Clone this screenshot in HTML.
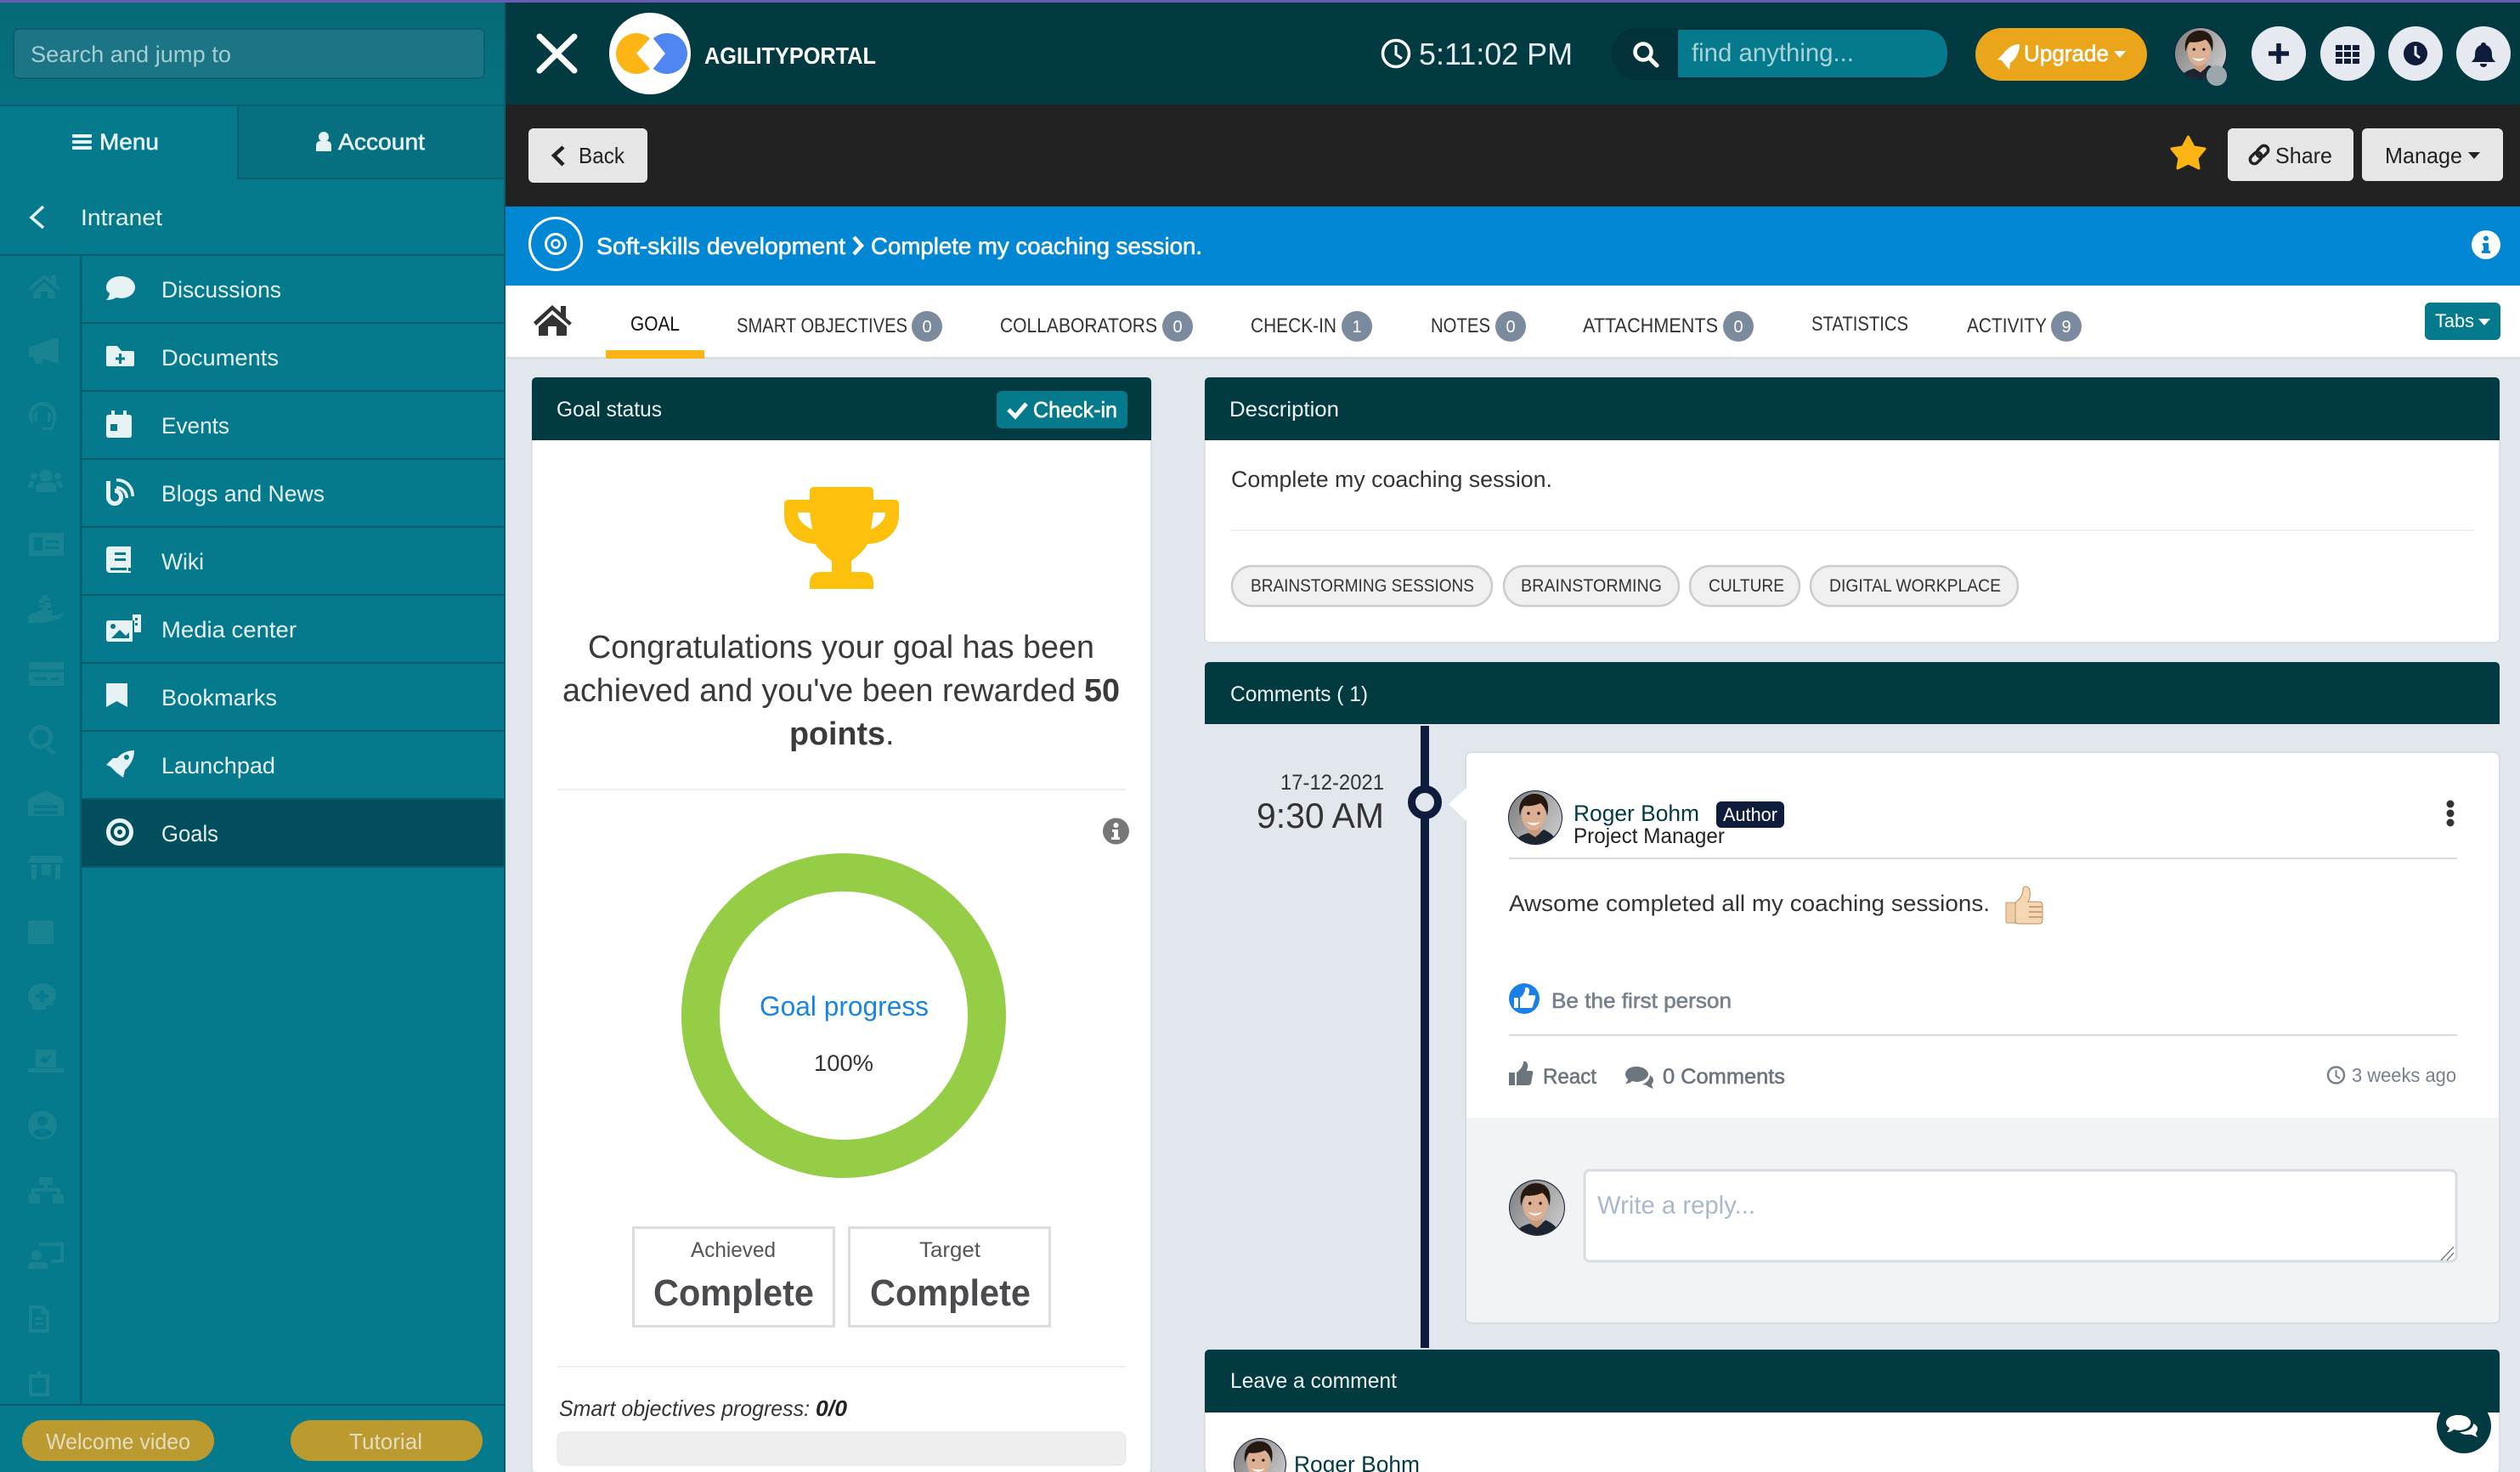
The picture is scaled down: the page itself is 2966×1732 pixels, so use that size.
<!DOCTYPE html>
<html lang="en"><head><meta charset="utf-8"><title>AgilityPortal</title>
<style>
html,body{margin:0;padding:0;width:2966px;height:1732px;overflow:hidden;background:#e2e7ee}
svg{display:block;font-size:27px}
text{font-family:"Liberation Sans",Arial,sans-serif;white-space:pre}
.s{fill:#e6f2f4}
.w{fill:#fff}
.semi{stroke:currentColor;stroke-width:.6px}
.tab{font-size:24px;fill:#333}
.bd{font-size:20px;fill:#fff;text-anchor:middle}
.tag{font-size:21px;fill:#333}
</style></head><body>
<svg xmlns="http://www.w3.org/2000/svg" width="2966" height="1732" viewBox="0 0 2966 1732">
<defs>
<linearGradient id="sbt" x1="0" y1="0" x2="0" y2="1"><stop offset="0" stop-color="#066a78"/><stop offset="1" stop-color="#067280"/></linearGradient>
<linearGradient id="avbg" x1="0" y1="0" x2="1" y2="0.6"><stop offset="0" stop-color="#7c7c7c"/><stop offset="1" stop-color="#c4c4c4"/></linearGradient>
<clipPath id="avc"><circle cx="32" cy="32" r="31"/></clipPath>
<symbol id="av" viewBox="0 0 64 64">
<circle cx="32" cy="32" r="32" fill="#101c3c"/>
<g clip-path="url(#avc)">
<rect width="64" height="64" fill="url(#avbg)"/>
<path d="M6 64C10 54 18 52 24 50L32 54L42 46C50 50 56 54 58 64Z" fill="#1c2430"/>
<path d="M24 42H38V50L32 55L24 50Z" fill="#c89a7e"/>
<ellipse cx="30" cy="29" rx="14" ry="18" fill="#dcae92"/>
<path d="M14 30C10 13 21 4 31 4C43 4 50 13 46 30C45 23 42 18 38 15C32 18 24 19 19 18C16 21 15 25 14 30Z" fill="#241811"/>
<path d="M22 37Q30 45 38 37Q30 40 22 37Z" fill="#fff"/>
<circle cx="24" cy="27" r="1.700" fill="#2a1a12"/><circle cx="36" cy="27" r="1.700" fill="#2a1a12"/>
</g>
</symbol>
</defs>

<rect width="2966" height="1732" fill="#e2e7ee"/>
<rect width="2966" height="4" fill="#6a5cb4"/>

<!-- SIDEBAR -->
<rect x="0" y="3" width="595" height="1729" fill="#047a8c"/>
<rect x="0" y="3" width="593" height="121" fill="url(#sbt)"/>
<rect x="280" y="124" width="313" height="86" fill="#067080"/>
<rect x="0" y="123" width="593" height="2" fill="#0a5c6e"/>
<rect x="279" y="123" width="2" height="88" fill="#0a5c6e"/>
<rect x="280" y="209" width="313" height="2" fill="#0a5c6e"/>
<rect x="593" y="3" width="2" height="1729" fill="#0a5c6e"/>
<rect x="16" y="34" width="554" height="58" rx="6" fill="#1b7584" stroke="#0b5f70" stroke-width="2"/>
<text x="36" y="73" font-size="27" textLength="236" lengthAdjust="spacingAndGlyphs" fill="#a6cdd3">Search and jump to</text>

<g fill="#e6f2f4"><rect x="85" y="158" width="23" height="4" rx="1"/><rect x="85" y="165" width="23" height="4" rx="1"/><rect x="85" y="172" width="23" height="4" rx="1"/>
<circle cx="381" cy="161" r="6"/><path d="M372 178V172Q372 166 377 166H385Q390 166 390 172V178Z"/></g>
<text x="117" y="176" textLength="70" lengthAdjust="spacingAndGlyphs" class="s semi" color="#e6f2f4">Menu</text>
<text x="398" y="176" textLength="102" lengthAdjust="spacingAndGlyphs" class="s semi" color="#e6f2f4">Account</text>
<path d="M51 243L37 256L51 268" fill="none" stroke="#e6f2f4" stroke-width="3.500"/>
<text x="95" y="265" textLength="96" lengthAdjust="spacingAndGlyphs" class="s">Intranet</text>

<rect x="0" y="299" width="593" height="2" fill="#0a5c6e"/>
<rect x="96" y="940" width="497" height="80" fill="#034e5c"/>
<g fill="#0a5c6e"><rect x="94" y="300" width="2.500" height="1353"/>
<rect x="96" y="379" width="497" height="2"/><rect x="96" y="459" width="497" height="2"/><rect x="96" y="539" width="497" height="2"/><rect x="96" y="619" width="497" height="2"/><rect x="96" y="699" width="497" height="2"/><rect x="96" y="779" width="497" height="2"/><rect x="96" y="859" width="497" height="2"/><rect x="96" y="939" width="497" height="2"/><rect x="96" y="1019" width="497" height="2"/>
<rect x="0" y="1652" width="593" height="2"/></g>

<g fill="#e6f2f4">
<text x="190" y="350" textLength="141" lengthAdjust="spacingAndGlyphs" class="s">Discussions</text>
<text x="190" y="430" textLength="138" lengthAdjust="spacingAndGlyphs" class="s">Documents</text>
<text x="190" y="510" textLength="80" lengthAdjust="spacingAndGlyphs" class="s">Events</text>
<text x="190" y="590" textLength="192" lengthAdjust="spacingAndGlyphs" class="s">Blogs and News</text>
<text x="190" y="670" textLength="50" lengthAdjust="spacingAndGlyphs" class="s">Wiki</text>
<text x="190" y="750" textLength="159" lengthAdjust="spacingAndGlyphs" class="s">Media center</text>
<text x="190" y="830" textLength="136" lengthAdjust="spacingAndGlyphs" class="s">Bookmarks</text>
<text x="190" y="910" textLength="134" lengthAdjust="spacingAndGlyphs" class="s">Launchpad</text>
<text x="190" y="990" textLength="67" lengthAdjust="spacingAndGlyphs" class="s">Goals</text>
<!-- discussions -->
<path d="M142 325C152 325 159 331 159 338C159 345 152 351 142 351L137 350C134 352 130 353 125 353C128 350 129 347 129 345C126 343 125 341 125 338C125 331 132 325 142 325Z"/>
<!-- documents -->
<path fill-rule="evenodd" d="M127 407H138L143 413H156Q158 413 158 415V429Q158 431 156 431H127Q125 431 125 429V409Q125 407 127 407ZM140 416V420.500H136V423.500H140V428H143V423.500H147V420.500H143V416Z"/>
<!-- events -->
<path fill-rule="evenodd" d="M131 483H135V488H145V483H149V488H152Q155 488 155 491V512Q155 515 152 515H128Q125 515 125 512V491Q125 488 128 488H131ZM130 499V507H138V499Z"/>
<path d="M127.500 566V585A7.500 7.500 0 1 0 135 577.500" fill="none" stroke="#e6f2f4" stroke-width="5"/>
<path d="M137 572C145 572 151 578 151 586H147.500C147.500 580 143 575.500 137 575.500Z"/><path d="M137 563C150 563 158 572 158 584H154.500C154.500 574 147 566.500 137 566.500Z"/>
<!-- wiki -->
<path fill-rule="evenodd" d="M129 643H154V668H151V672H154V674H130Q125 674 125 669V647Q125 643 129 643ZM135 650V653H148V650ZM135 657V660H148V657ZM130 668V671H149V668Z"/>
<!-- media -->
<path fill-rule="evenodd" d="M128 730H156V755H128Q125 755 125 752V733Q125 730 128 730ZM131 751L141 741L148 748L152 744V751ZM156 723H166V744H158V730H156Z"/><circle cx="133" cy="737" r="3" fill="#047a8c"/><rect x="159" y="727" width="3" height="3" fill="#047a8c"/><rect x="159" y="733" width="3" height="3" fill="#047a8c"/>
<!-- bookmark -->
<path d="M125 804H150V832L137.500 825L125 832Z"/>
<!-- rocket -->
<path fill-rule="evenodd" d="M158 883C158 893 153 901 147 906L145 915L137 909L130 902L125 900L133 892L138 892C143 886 150 883 158 883ZM149 888A3 3 0 1 0 149 894A3 3 0 1 0 149 888Z"/>
</g>
<g fill="none" stroke="#e6f2f4"><circle cx="141" cy="979" r="13.500" stroke-width="5"/><circle cx="141" cy="979" r="5" stroke-width="4"/></g>

<!-- faint strip icons -->
<g fill="#1a8392">
<path d="M34 338L52 323L60 329V324H66V335L71 339L69 342L52 328L36 342ZM39 344L52 332L65 344V351H56V343H48V351H39Z"/>
<path d="M34 408L45 405L63 398H69V427H64L50 422V428H41L40 420H34Z"/>
<path fill-rule="evenodd" d="M50 473C41 473 34 480 34 490C34 494 36 498 39 499L39 493C37 488 40 477 50 477C60 477 63 487 62 495L60 503H50V506H62L66 494C68 483 62 473 50 473ZM44 484C38 484 38 497 44 497ZM56 484V497C62 497 62 484 56 484Z"/>
<circle cx="54" cy="560" r="7.500"/><circle cx="40" cy="560" r="4"/><circle cx="68" cy="560" r="4"/><path d="M42 579V574Q42 568 48 568H60Q66 568 66 574V579ZM33 574Q33 566 38 566H41L38 574ZM74 574Q74 566 69 566H66L70 574Z"/>
<path fill-rule="evenodd" d="M34 627H75V654H34ZM40 632V648H50V632ZM54 636V639H70V636ZM54 643V646H70V643Z"/>
<path d="M33 724L48 718H62L60 724H68L75 720L71 728L50 733H33ZM50 700H56V704C60 704 60 707 60 707H52V709H60V715H56V718H50V715H46V712H54V710H46V704H50Z"/>
<path fill-rule="evenodd" d="M34 779H75V807H34ZM34 788V791H75V788ZM40 797V800H55V797ZM60 797V800H70V797Z"/>
<path fill-rule="evenodd" d="M48 853A14 14 0 1 0 48 881A14 14 0 1 0 48 853ZM48 858A9 9 0 1 1 48 876A9 9 0 1 1 48 858ZM58 878L66 885L62 889L54 881Z"/>
<path fill-rule="evenodd" d="M33 941L54 930L75 941V960H33ZM40 947V951H68V947ZM40 954V958H68V954Z"/>
<path d="M36 1007H72L75 1015H33ZM37 1017H43V1035H37ZM49 1017H60V1030H49ZM65 1017H71V1035H65Z"/>
<rect x="33" y="1083" width="30" height="28" rx="2"/>
<path fill-rule="evenodd" d="M50 1157C38 1157 33 1165 33 1172C33 1176 35 1180 38 1182V1188H54V1183H62L66 1172C66 1164 60 1157 50 1157ZM47 1165H52V1170H57V1174H52V1179H47V1174H42V1170H47Z"/>
<path fill-rule="evenodd" d="M42 1235H66V1256H42ZM47 1248L51 1243L54 1246L60 1240V1244L54 1251ZM33 1257H75V1262H33Z"/>
<path fill-rule="evenodd" d="M50 1307A17 17 0 1 0 50 1341A17 17 0 1 0 50 1307ZM50 1313A6 6 0 1 1 50 1325A6 6 0 1 1 50 1313ZM39 1334Q41 1328 50 1328Q59 1328 61 1334Q56 1338 50 1338Q44 1338 39 1334Z"/>
<path d="M46 1385H62V1394H56V1398H71V1405H75V1416H62V1405H67V1402H41V1405H47V1416H34V1405H37V1398H52V1394H46Z"/>
<path fill-rule="evenodd" d="M46 1462H75V1486H60V1482H71V1466H46ZM43 1471A6 6 0 1 1 43 1483A6 6 0 1 1 43 1471ZM33 1493V1490Q33 1485 38 1485H50Q56 1485 56 1490V1493Z"/>
<path fill-rule="evenodd" d="M34 1536H50L58 1544V1568H34ZM38 1540V1564H54V1546H48V1540ZM41 1550H51V1553H41ZM41 1556H51V1559H41Z"/>
<path fill-rule="evenodd" d="M34 1617H44V1613H48V1617H58V1643H34ZM38 1621V1639H54V1621Z"/>
</g>

<rect x="26" y="1671" width="226" height="48" rx="24" fill="#bb9a2f"/>
<rect x="342" y="1671" width="226" height="48" rx="24" fill="#bb9a2f"/>
<text x="54" y="1705" font-size="26" textLength="170" lengthAdjust="spacingAndGlyphs" fill="#e4dcc0">Welcome video</text>
<text x="411" y="1705" font-size="26" textLength="86" lengthAdjust="spacingAndGlyphs" fill="#e4dcc0">Tutorial</text>

<!-- HEADER -->
<rect x="595" y="3" width="2371" height="121" fill="#023a41"/>
<path d="M635 43L676 83M676 43L635 83" stroke="#fff" stroke-width="7" stroke-linecap="round"/>
<circle cx="765" cy="63" r="48" fill="#fff"/>
<circle cx="749" cy="63" r="24" fill="#fdb515"/>
<circle cx="785" cy="63" r="24" fill="#4f86f2"/>
<path d="M767 43L783 63L767 83L749 63Z" fill="#fff"/>
<text x="829" y="75" font-size="28" font-weight="700" textLength="202" lengthAdjust="spacingAndGlyphs" fill="#fff">AGILITYPORTAL</text>
<circle cx="1643" cy="63" r="15.500" fill="none" stroke="#fff" stroke-width="3.500"/><path d="M1643 53V64L1650 69" fill="none" stroke="#fff" stroke-width="3"/>
<text x="1670" y="76" font-size="36" textLength="181" lengthAdjust="spacingAndGlyphs" fill="#e4ecee">5:11:02 PM</text>
<rect x="1898" y="34" width="395" height="59" rx="29" fill="#03323a" stroke="#04303a" stroke-width="2"/>
<path d="M1975 35H2264Q2292 35 2292 63Q2292 91 2264 91H1975Z" fill="#047a8c"/>
<circle cx="1934" cy="61" r="9.500" fill="none" stroke="#fff" stroke-width="4.500"/><path d="M1941 68L1950 77" stroke="#fff" stroke-width="5" stroke-linecap="round"/>
<text x="1991" y="72" font-size="30" textLength="191" lengthAdjust="spacingAndGlyphs" fill="#a8d3d8">find anything...</text>
<rect x="2325" y="33" width="202" height="62" rx="31" fill="#eaa51b"/>
<path fill-rule="evenodd" d="M2377 52C2377 62 2372 70 2366 74L2365 82L2358 74L2356 71L2351 70L2358 63C2363 56 2370 52 2377 52Z" fill="#fff"/>
<text x="2382" y="72" font-size="27" textLength="100" lengthAdjust="spacingAndGlyphs" class="w semi" color="#fff">Upgrade</text>
<path d="M2488 60H2502L2495 68Z" fill="#fff"/>
<use href="#av" x="2559" y="32" width="62" height="62"/>
<circle cx="2609" cy="89" r="12" fill="#9aa8ad"/>
<circle cx="2682" cy="63" r="32" fill="#e6e9f0"/><circle cx="2763" cy="63" r="32" fill="#e6e9f0"/><circle cx="2843" cy="63" r="32" fill="#e6e9f0"/><circle cx="2923" cy="63" r="32" fill="#e6e9f0"/>
<path d="M2670 63H2694M2682 51V75" stroke="#101c3c" stroke-width="5.500"/>
<g fill="#101c3c"><rect x="2749" y="53" width="8" height="6"/><rect x="2759" y="53" width="8" height="6"/><rect x="2769" y="53" width="8" height="6"/><rect x="2749" y="61" width="8" height="6"/><rect x="2759" y="61" width="8" height="6"/><rect x="2769" y="61" width="8" height="6"/><rect x="2749" y="69" width="8" height="6"/><rect x="2759" y="69" width="8" height="6"/><rect x="2769" y="69" width="8" height="6"/>
<circle cx="2843" cy="63" r="14"/><path d="M2923 50Q2926 50 2926 53C2932 55 2933 60 2933 65C2933 70 2936 71 2937 73H2909C2910 71 2913 70 2913 65C2913 60 2914 55 2920 53Q2920 50 2923 50ZM2919 75H2927Q2927 79 2923 79Q2919 79 2919 75Z"/></g>
<path d="M2843 54V64L2848 68" fill="none" stroke="#e6e9f0" stroke-width="3"/>

<!-- DARK BAR -->
<rect x="595" y="123" width="2371" height="120" fill="#222"/>
<rect x="622" y="151" width="140" height="64" rx="6" fill="#e6e6e6"/>
<path d="M663 173L652 183L663 194" fill="none" stroke="#222" stroke-width="4.500"/>
<text x="681" y="192" font-size="26" textLength="54" lengthAdjust="spacingAndGlyphs" fill="#222">Back</text>
<path d="M2575.500 161L2582 173L2595 175L2586 186L2588 198L2575.500 192L2563 198L2565 186L2556 175L2569 173Z" fill="#fdb515" stroke="#fdb515" stroke-width="3" stroke-linejoin="round"/>
<rect x="2622" y="151" width="148" height="62" rx="6" fill="#e6e6e6"/>
<g transform="rotate(-45 2659 182)" fill="none" stroke="#222" stroke-width="3.500"><rect x="2646" y="177" width="15" height="10" rx="5"/><rect x="2657" y="177" width="15" height="10" rx="5"/></g>
<text x="2678" y="192" font-size="26" textLength="67" lengthAdjust="spacingAndGlyphs" fill="#222">Share</text>
<rect x="2780" y="151" width="166" height="62" rx="6" fill="#e6e6e6"/>
<text x="2807" y="192" font-size="26" textLength="91" lengthAdjust="spacingAndGlyphs" fill="#222">Manage</text>
<path d="M2905 179H2919L2912 187Z" fill="#222"/>

<!-- BLUE BAR -->
<rect x="595" y="243" width="2371" height="93" fill="#0287d4"/>
<circle cx="654" cy="287" r="30.500" fill="none" stroke="#fff" stroke-width="3"/>
<circle cx="654" cy="287" r="11.500" fill="none" stroke="#fff" stroke-width="3"/><circle cx="654" cy="287" r="4.500" fill="none" stroke="#fff" stroke-width="2.500"/>
<text x="702" y="299" font-size="28" textLength="293" lengthAdjust="spacingAndGlyphs" class="w semi" color="#fff">Soft-skills development</text>
<path d="M1005 279L1014 289L1005 299" fill="none" stroke="#fff" stroke-width="4.500"/>
<text x="1025" y="299" font-size="28" textLength="390" lengthAdjust="spacingAndGlyphs" class="w semi" color="#fff">Complete my coaching session.</text>
<circle cx="2926" cy="288" r="17" fill="#fff"/><circle cx="2926" cy="280.500" r="3" fill="#0287d4"/><path d="M2922 286H2929V295H2931V298H2921V295H2923V289H2922Z" fill="#0287d4"/>

<!-- TAB BAR -->
<rect x="595" y="336" width="2371" height="84" fill="#fff"/>
<rect x="595" y="420" width="2371" height="2" fill="#d8dce0"/>
<path d="M628 379L650 359L660 368V360H666V374L673 380L670 383L650 365L631 383ZM634 384L650 370L667 384V395H655V384H645V395H634Z" fill="#333"/>
<text x="742" y="389" font-size="24" textLength="58" lengthAdjust="spacingAndGlyphs" fill="#111">GOAL</text>
<rect x="713" y="412" width="116" height="10" fill="#fdb515"/>
<text x="867" y="391" textLength="201" lengthAdjust="spacingAndGlyphs" class="tab">SMART OBJECTIVES</text>
<text x="1177" y="391" textLength="185" lengthAdjust="spacingAndGlyphs" class="tab">COLLABORATORS</text>
<text x="1472" y="391" textLength="101" lengthAdjust="spacingAndGlyphs" class="tab">CHECK-IN</text>
<text x="1684" y="391" textLength="70" lengthAdjust="spacingAndGlyphs" class="tab">NOTES</text>
<text x="1863" y="391" textLength="159" lengthAdjust="spacingAndGlyphs" class="tab">ATTACHMENTS</text>
<text x="2132" y="389" textLength="114" lengthAdjust="spacingAndGlyphs" class="tab">STATISTICS</text>
<text x="2315" y="391" textLength="94" lengthAdjust="spacingAndGlyphs" class="tab">ACTIVITY</text>
<g fill="#7b8a9e"><circle cx="1091" cy="384" r="18"/><circle cx="1386" cy="384" r="18"/><circle cx="1597" cy="384" r="18"/><circle cx="1778" cy="384" r="18"/><circle cx="2046" cy="384" r="18"/><circle cx="2432" cy="384" r="18"/></g>
<text x="1091" y="391" class="bd">0</text><text x="1386" y="391" class="bd">0</text><text x="1597" y="391" class="bd">1</text><text x="1778" y="391" class="bd">0</text><text x="2046" y="391" class="bd">0</text><text x="2432" y="391" class="bd">9</text>
<rect x="2854" y="356" width="89" height="44" rx="6" fill="#047a8c"/>
<text x="2866" y="385" font-size="22" textLength="46" lengthAdjust="spacingAndGlyphs" class="w">Tabs</text>
<path d="M2917 375H2931L2924 383Z" fill="#fff"/>

<!-- LEFT PANEL -->
<rect x="626" y="444" width="729" height="1290" rx="6" fill="#fff" stroke="#d6dce3" stroke-width="1.500"/>
<path d="M632 444H1349Q1355 444 1355 450V518H626V450Q626 444 632 444Z" fill="#023a41"/>
<text x="655" y="490" font-size="25" textLength="124" lengthAdjust="spacingAndGlyphs" fill="#eef4f5">Goal status</text>
<rect x="1173" y="460" width="154" height="44" rx="6" fill="#047a8c"/>
<path d="M1187 482L1195 490L1208 475" fill="none" stroke="#fff" stroke-width="5"/>
<text x="1216" y="491" font-size="26" textLength="99" lengthAdjust="spacingAndGlyphs" class="w semi" color="#fff">Check-in</text>
<path fill-rule="evenodd" fill="#fdc10d" d="M958 573H1023Q1028 573 1028 578V588H1053Q1058 588 1058 593V606C1058 628 1040 640 1021 640C1017 648 1010 654 1002 660V673H1015Q1028 673 1028 686V693H953V686Q953 673 966 673H979V660C971 654 964 648 960 640C941 640 923 628 923 606V593Q923 588 928 588H953V578Q953 573 958 573ZM939 603C939 612 946 618 956 623L953 603ZM1042 603H1028L1025 623C1035 618 1042 612 1042 603Z"/>
<text x="692" y="774" font-size="38" textLength="596" lengthAdjust="spacingAndGlyphs" fill="#3a3a3a">Congratulations your goal has been</text>
<text x="662" y="825" font-size="38" textLength="604" lengthAdjust="spacingAndGlyphs" fill="#3a3a3a">achieved and you've been rewarded</text>
<text x="1276" y="825" font-size="38" font-weight="700" textLength="42" lengthAdjust="spacingAndGlyphs" fill="#3a3a3a">50</text>
<text x="929" y="876" font-size="38" font-weight="700" textLength="113" lengthAdjust="spacingAndGlyphs" fill="#3a3a3a">points</text>
<text x="1042" y="876" font-size="38" fill="#3a3a3a">.</text>
<rect x="656" y="928" width="669" height="2" fill="#eceef0"/>
<circle cx="1313.500" cy="978" r="15.500" fill="#777"/><circle cx="1313.500" cy="971" r="3" fill="#fff"/><path d="M1309 976H1316V985H1318V988H1308V985H1311V979H1309Z" fill="#fff"/>
<circle cx="993" cy="1195" r="168.500" fill="none" stroke="#95cd47" stroke-width="45"/>
<text x="894" y="1195" font-size="32" textLength="199" lengthAdjust="spacingAndGlyphs" fill="#1a85e0">Goal progress</text>
<text x="958" y="1260" font-size="27" textLength="70" lengthAdjust="spacingAndGlyphs" fill="#333">100%</text>
<rect x="745.500" y="1444.500" width="236" height="116" fill="#fff" stroke="#dcdcdc" stroke-width="3"/>
<rect x="999.500" y="1444.500" width="236" height="116" fill="#fff" stroke="#dcdcdc" stroke-width="3"/>
<text x="813" y="1479" font-size="25" textLength="100" lengthAdjust="spacingAndGlyphs" fill="#555">Achieved</text>
<text x="1082" y="1479" font-size="25" textLength="72" lengthAdjust="spacingAndGlyphs" fill="#555">Target</text>
<text x="769" y="1536" font-size="44" font-weight="700" textLength="189" lengthAdjust="spacingAndGlyphs" fill="#4a4a4f">Complete</text>
<text x="1024" y="1536" font-size="44" font-weight="700" textLength="189" lengthAdjust="spacingAndGlyphs" fill="#4a4a4f">Complete</text>
<rect x="656" y="1607" width="669" height="2" fill="#eceef0"/>
<text x="658" y="1666" font-size="26" font-style="italic" textLength="295" lengthAdjust="spacingAndGlyphs" fill="#333">Smart objectives progress:</text>
<text x="960" y="1666" font-size="26" font-style="italic" font-weight="700" textLength="37" lengthAdjust="spacingAndGlyphs" fill="#222">0/0</text>
<rect x="656" y="1685" width="669" height="39" rx="8" fill="#eee" stroke="#e4e4e4" stroke-width="1"/>

<!-- DESCRIPTION -->
<rect x="1418" y="444" width="1524" height="312" rx="6" fill="#fff" stroke="#d6dce3" stroke-width="1.500"/>
<path d="M1424 444H2936Q2942 444 2942 450V518H1418V450Q1418 444 1424 444Z" fill="#023a41"/>
<text x="1447" y="490" font-size="25" textLength="129" lengthAdjust="spacingAndGlyphs" fill="#eef4f5">Description</text>
<text x="1449" y="573" font-size="27" textLength="378" lengthAdjust="spacingAndGlyphs" fill="#333">Complete my coaching session.</text>
<rect x="1449" y="623" width="1462" height="2" fill="#eceef0"/>
<g fill="#f0f0f0" stroke="#c9cdd1" stroke-width="2.500">
<rect x="1450" y="666" width="306" height="47" rx="23.500"/><rect x="1770" y="666" width="206" height="47" rx="23.500"/><rect x="1989" y="666" width="129" height="47" rx="23.500"/><rect x="2131" y="666" width="244" height="47" rx="23.500"/></g>
<text x="1472" y="696" textLength="263" lengthAdjust="spacingAndGlyphs" class="tag">BRAINSTORMING SESSIONS</text>
<text x="1790" y="696" textLength="166" lengthAdjust="spacingAndGlyphs" class="tag">BRAINSTORMING</text>
<text x="2011" y="696" textLength="89" lengthAdjust="spacingAndGlyphs" class="tag">CULTURE</text>
<text x="2153" y="696" textLength="202" lengthAdjust="spacingAndGlyphs" class="tag">DIGITAL WORKPLACE</text>

<!-- COMMENTS -->
<path d="M1424 779H2936Q2942 779 2942 785V852H1418V785Q1418 779 1424 779Z" fill="#023a41"/>
<text x="1448" y="825" font-size="25" textLength="162" lengthAdjust="spacingAndGlyphs" fill="#eef4f5">Comments ( 1)</text>
<rect x="1672" y="854" width="10" height="732" fill="#101c3c"/>
<circle cx="1677" cy="944" r="15.500" fill="#e2e7ee" stroke="#101c3c" stroke-width="9"/>
<text x="1507" y="929" font-size="25" textLength="122" lengthAdjust="spacingAndGlyphs" fill="#333">17-12-2021</text>
<text x="1479" y="974" font-size="42" textLength="150" lengthAdjust="spacingAndGlyphs" fill="#333">9:30 AM</text>
<path d="M1732 885H2934Q2942 885 2942 893V1549Q2942 1557 2934 1557H1732Q1725 1557 1725 1549V893Q1725 885 1732 885Z" fill="#f1f3f5" stroke="#d6dce3" stroke-width="2"/>
<path d="M1732 886H2934Q2941 886 2941 893V1315H1726V893Q1726 886 1732 886Z" fill="#fff"/>
<path d="M1726 927L1705 946L1726 966Z" fill="#fff"/>
<use href="#av" x="1775" y="930" width="64" height="64"/>
<text x="1852" y="966" font-size="27" textLength="148" lengthAdjust="spacingAndGlyphs" fill="#023a41">Roger Bohm</text>
<rect x="2020" y="943" width="80" height="31" rx="6" fill="#101c3c"/>
<text x="2028" y="966" font-size="22" textLength="64" lengthAdjust="spacingAndGlyphs" class="w">Author</text>
<text x="1852" y="992" font-size="25" textLength="178" lengthAdjust="spacingAndGlyphs" fill="#222">Project Manager</text>
<g fill="#333"><circle cx="2884" cy="946" r="4.500"/><circle cx="2884" cy="957" r="4.500"/><circle cx="2884" cy="968" r="4.500"/></g>
<rect x="1776" y="1009" width="1116" height="2" fill="#d8dce0"/>
<text x="1776" y="1072" font-size="27" textLength="566" lengthAdjust="spacingAndGlyphs" fill="#333">Awsome completed all my coaching sessions.</text>
<!-- thumbs up emoji -->
<path d="M2361 1062H2372V1086H2363Q2361 1086 2361 1084Z" fill="#f0cfa8" stroke="#c59a6c"/>
<path d="M2372 1062C2377 1058 2381 1054 2381 1046C2381 1042 2388 1042 2389 1048C2390 1053 2389 1058 2387 1061H2400Q2404 1061 2404 1066V1082Q2404 1087 2400 1087H2376Q2372 1087 2372 1084Z" fill="#f5d7b3" stroke="#b98f62"/>
<path d="M2388 1067H2403M2388 1073H2403M2388 1079H2403" stroke="#b98f62" stroke-width="1.500" fill="none"/>
<circle cx="1794" cy="1175" r="18" fill="#1a80e8"/>
<path d="M1782 1174H1787V1186H1782ZM1789 1174C1793 1171 1795 1167 1795 1163C1795 1161 1800 1161 1800 1166C1800 1168 1799 1170 1799 1171H1805Q1808 1171 1807 1174L1804 1184Q1804 1186 1801 1186H1789Z" fill="#fff"/>
<text x="1826" y="1186" font-size="25" textLength="212" lengthAdjust="spacingAndGlyphs" fill="#76808e" class="semi" color="#76808e">Be the first person</text>
<rect x="1776" y="1217" width="1116" height="2" fill="#d8dce0"/>
<path d="M1776 1262H1783V1277H1776ZM1785 1262C1790 1258 1793 1254 1793 1249C1797 1248 1799 1252 1798 1256L1797 1260H1803Q1805 1261 1804 1264L1802 1275Q1801 1277 1798 1277H1785Z" fill="#6c757d"/>
<text x="1816" y="1275" font-size="25" textLength="63" lengthAdjust="spacingAndGlyphs" fill="#6c757d" class="semi" color="#6c757d">React</text>
<path d="M1926 1255C1935 1255 1940 1260 1940 1264C1940 1268 1934 1273 1926 1273L1921 1272C1918 1275 1915 1275 1913 1275C1915 1273 1916 1271 1916 1270C1914 1268 1913 1266 1913 1264C1913 1259 1918 1255 1926 1255Z" fill="#6c757d"/>
<path d="M1942 1265C1945 1267 1946 1269 1946 1271C1946 1273 1945 1274 1944 1276C1944 1277 1945 1279 1946 1281C1943 1280 1940 1279 1938 1277L1933 1276C1938 1274 1942 1270 1942 1265Z" fill="#6c757d"/>
<text x="1957" y="1275" font-size="25" textLength="144" lengthAdjust="spacingAndGlyphs" fill="#6c757d" class="semi" color="#6c757d">0 Comments</text>
<circle cx="2749.500" cy="1265" r="9.500" fill="none" stroke="#76808e" stroke-width="2.500"/><path d="M2749.500 1259V1266L2754 1269" fill="none" stroke="#76808e" stroke-width="2"/>
<text x="2768" y="1273" font-size="23" textLength="123" lengthAdjust="spacingAndGlyphs" fill="#76808e">3 weeks ago</text>
<use href="#av" x="1776" y="1388" width="66" height="66"/>
<rect x="1865" y="1377" width="1026" height="107" rx="6" fill="#fff" stroke="#d8dce3" stroke-width="3"/>
<text x="1880" y="1428" font-size="30" textLength="186" lengthAdjust="spacingAndGlyphs" fill="#a9b8cc">Write a reply...</text>
<path d="M2873 1483L2888 1467M2880 1483L2888 1474" stroke="#555" stroke-width="1"/>

<!-- LEAVE A COMMENT -->
<rect x="1418" y="1588" width="1524" height="146" rx="6" fill="#fff" stroke="#d6dce3" stroke-width="1.500"/>
<path d="M1424 1588H2936Q2942 1588 2942 1594V1662H1418V1594Q1418 1588 1424 1588Z" fill="#023a41"/>
<text x="1448" y="1633" font-size="25" textLength="196" lengthAdjust="spacingAndGlyphs" fill="#eef4f5">Leave a comment</text>
<use href="#av" x="1452" y="1692" width="62" height="62"/>
<text x="1523" y="1732" font-size="27" textLength="148" lengthAdjust="spacingAndGlyphs" fill="#023a41">Roger Bohm</text>
<circle cx="2900" cy="1678" r="32" fill="#023a41"/>
<path d="M2893 1665C2902 1665 2908 1669 2908 1674C2908 1679 2902 1683 2893 1683L2888 1682C2885 1685 2882 1685 2880 1685C2882 1683 2883 1681 2883 1680C2880 1678 2879 1676 2879 1674C2879 1669 2885 1665 2893 1665Z" fill="#fff"/>
<path d="M2911 1675C2915 1677 2916 1679 2916 1681C2916 1683 2915 1685 2914 1686C2914 1688 2915 1689 2916 1691C2913 1690 2911 1689 2909 1688L2904 1688C2900 1688 2897 1687 2895 1685C2904 1685 2911 1681 2911 1675Z" fill="#fff"/>
</svg>
</body></html>
